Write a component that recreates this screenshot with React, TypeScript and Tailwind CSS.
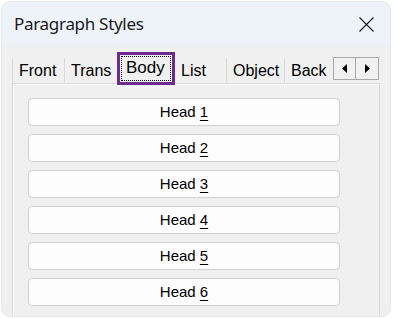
// Paragraph Styles dialog — title bar, tab strip with the "Body" tab
// focused, and a column of heading buttons in the tab panel.

const tabs = [
  { label: "Front", w: "w-[53px]" },
  { label: "Trans", w: "w-[52px]" },
  { label: "Body", w: "w-[58px]", selected: true },
  { label: "List", w: "w-[52px]" },
  { label: "Object", w: "w-[58px]" },
  { label: "Back", w: "w-[47px]" },
];

const heads = [1, 2, 3, 4, 5, 6];

export default function App() {
  return (
    <div className="w-[394px] h-[319px] bg-white overflow-hidden pt-[2px] pl-[2px]">
      <div className="w-[388px] h-[314px] rounded-lg overflow-hidden bg-[#f0f0f0] flex flex-col shadow-[0_0_0_1px_#e8e8e8]">
        {/* title bar */}
        <div className="h-[43px] shrink-0 bg-[#eef2f9] flex items-center justify-between pl-[12px] pr-[16px]">
          <span className="text-[17px] text-[#1a1a1a] font-['Noto_Sans',sans-serif] tracking-[-0.3px]">
            Paragraph Styles
          </span>
          <svg width="15" height="15" viewBox="0 0 15 15" className="mt-[1px]">
            <path d="M0.5 0.5 L14.5 14.5 M14.5 0.5 L0.5 14.5" stroke="#1a1a1a" strokeWidth="1.1" fill="none" />
          </svg>
        </div>

        {/* tab strip */}
        <div className="mt-[7px] ml-[10px] h-[31px] shrink-0 flex items-start font-['Liberation_Sans',Arial,sans-serif] text-[16px] text-black">
          {tabs.map((t, i) =>
            t.selected ? (
              <div
                key={t.label}
                className={`${t.w} h-[33px] relative z-10 border-[3px] border-[#6b2b8f] bg-[#f0f0f0] p-[1px]`}
              >
                <div className="h-full border border-dotted border-black flex items-center pl-[4px] pb-[2px] text-[17px]">
                  {t.label}
                </div>
              </div>
            ) : (
              <div
                key={t.label}
                className={`${t.w} mt-[6px] h-[25px] pl-[6px] flex items-center whitespace-nowrap overflow-hidden ${
                  i === 0 ? "border-l border-[#d9d9d9]" : ""
                } ${i === 0 || i === 3 || i === 4 ? "border-r border-[#d9d9d9]" : ""}`}
              >
                {t.label}
              </div>
            )
          )}
          <div className="ml-[1px] mt-[5px] h-[23px] flex border border-[#a8a8a8] bg-[#f0f0f0]">
            <div className="w-[22px] flex items-center justify-center border-r border-[#a8a8a8]">
              <svg width="5" height="9" viewBox="0 0 5 9">
                <path d="M5 0 L0 4.5 L5 9 Z" fill="#000" />
              </svg>
            </div>
            <div className="w-[22px] flex items-center justify-center">
              <svg width="5" height="9" viewBox="0 0 5 9">
                <path d="M0 0 L5 4.5 L0 9 Z" fill="#000" />
              </svg>
            </div>
          </div>
        </div>

        {/* tab panel */}
        <div className="ml-[10px] w-[368px] flex-1 border border-b-0 border-[#d9d9d9] bg-[#f0f0f0] shadow-[inset_1px_1px_0_#ffffff] pt-[14px] pl-[15px] flex flex-col gap-[8px]">
          {heads.map((n) => (
            <button
              key={n}
              className="w-[312px] h-[28px] shrink-0 rounded-[4px] border border-[#d0d0d0] bg-[#fdfdfd] text-[15px] text-black font-['Liberation_Sans',Arial,sans-serif] flex items-center justify-center"
            >
              Head&nbsp;<span className="underline underline-offset-[3px]">{n}</span>
            </button>
          ))}
        </div>
      </div>
    </div>
  );
}
